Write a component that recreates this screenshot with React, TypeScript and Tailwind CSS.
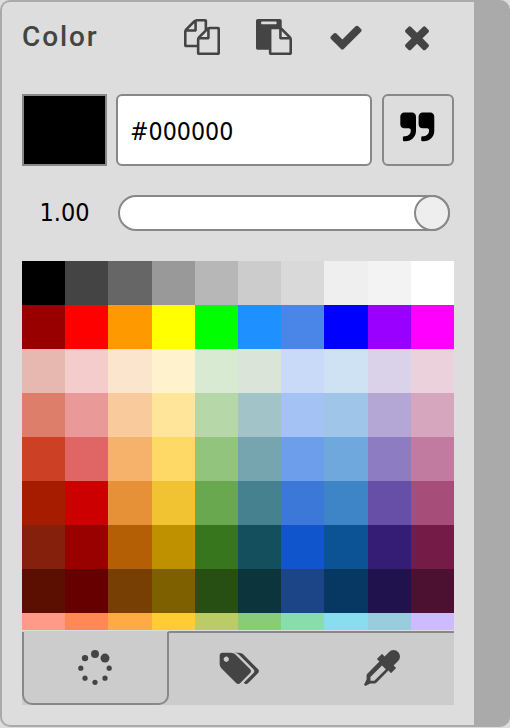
import React from 'react';

const palette: string[] = [
  '#000000', '#444444', '#666666', '#999999', '#b7b7b7', '#cccccc', '#d9d9d9', '#efefef', '#f3f3f3', '#ffffff',
  '#980000', '#ff0000', '#ff9900', '#ffff00', '#00ff00', '#1e90ff', '#4a86e8', '#0000ff', '#9900ff', '#ff00ff',
  '#e6b8af', '#f4cccc', '#fce5cd', '#fff2cc', '#d9ead3', '#dae4d9', '#c9daf8', '#cfe2f3', '#d9d2e9', '#ead1dc',
  '#dd7e6b', '#ea9999', '#f9cb9c', '#ffe599', '#b6d7a8', '#a2c4c9', '#a4c2f4', '#9fc5e8', '#b4a7d6', '#d5a6bd',
  '#cc4125', '#e06666', '#f6b26b', '#ffd966', '#93c47d', '#76a5af', '#6d9eeb', '#6fa8dc', '#8e7cc3', '#c27ba0',
  '#a61c00', '#cc0000', '#e69138', '#f1c232', '#6aa84f', '#45818e', '#3c78d8', '#3d85c6', '#674ea7', '#a64d79',
  '#85200c', '#990000', '#b45f06', '#bf9000', '#38761d', '#134f5c', '#1155cc', '#0b5394', '#351c75', '#741b47',
  '#5b0f00', '#660000', '#783f04', '#7f6000', '#274e13', '#0c343d', '#1c4587', '#073763', '#20124d', '#4c1130',
  '#ff9988', '#ff8855', '#ffaa44', '#ffcc33', '#bbcc66', '#88cc77', '#88ddaa', '#88ddee', '#99ccdd', '#ccbbff',
];

const COPY =
  'M1696 384q40 0 68 28t28 68v1216q0 40-28 68t-68 28h-960q-40 0-68-28t-28-68v-288h-544q-40 0-68-28t-28-68v-672q0-40 20-88t48-76l408-408q28-28 76-48t88-20h416q40 0 68 28t28 68v328q68-40 128-40h416zm-544 213l-299 299h299v-299zm-640-384l-299 299h299v-299zm196 647l316-316v-416h-384v416q0 40-28 68t-68 28h-416v640h512v-256q0-40 20-88t48-76zm956 804v-1152h-384v416q0 40-28 68t-68 28h-416v640h896z';
const PASTE =
  'M768 1664h896v-640h-416q-40 0-68-28t-28-68v-416h-384v1152zm256-1440v-64q0-13-9.5-22.5t-22.5-9.5h-704q-13 0-22.5 9.5t-9.5 22.5v64q0 13 9.5 22.5t22.5 9.5h704q13 0 22.5-9.5t9.5-22.5zm256 672h299l-299-299v299zm512 128v672q0 40-28 68t-68 28h-960q-40 0-68-28t-28-68v-160h-544q-40 0-68-28t-28-68v-1344q0-40 28-68t68-28h1088q40 0 68 28t28 68v328q21 13 36 28l408 408q28 28 48 76t20 88z';
const CHECK =
  'M1671 566q0 40-28 68l-724 724-136 136q-28 28-68 28t-68-28l-136-136-362-362q-28-28-28-68t28-68l136-136q28-28 68-28t68 28l294 295 656-657q28-28 68-28t68 28l136 136q28 28 28 68z';
const CLOSE =
  'M1490 1322q0 40-28 68l-136 136q-28 28-68 28t-68-28l-294-294-294 294q-28 28-68 28t-68-28l-136-136q-28-28-28-68t28-68l294-294-294-294q-28-28-28-68t28-68l136-136q28-28 68-28t68 28l294 294 294-294q28-28 68-28t68 28l136 136q28 28 28 68t-28 68l-294 294 294 294q28 28 28 68z';
const QUOTE =
  'M832 320v704q0 104-40.5 198.5t-109.5 163.5-163.5 109.5-198.5 40.5h-64q-26 0-45-19t-19-45v-128q0-26 19-45t45-19h64q106 0 181-75t75-181v-32q0-40-28-68t-68-28h-224q-80 0-136-56t-56-136v-384q0-80 56-136t136-56h384q80 0 136 56t56 136zm896 0v704q0 104-40.5 198.5t-109.5 163.5-163.5 109.5-198.5 40.5h-64q-26 0-45-19t-19-45v-128q0-26 19-45t45-19h64q106 0 181-75t75-181v-32q0-40-28-68t-68-28h-224q-80 0-136-56t-56-136v-384q0-80 56-136t136-56h384q80 0 136 56t56 136z';
const TAGS =
  'M384 448q0-53-37.5-90.5t-90.5-37.5-90.5 37.5-37.5 90.5 37.5 90.5 90.5 37.5 90.5-37.5 37.5-90.5zm1067 576q0 53-37 90l-491 492q-39 37-91 37-53 0-90-37l-715-716q-38-37-64.5-101t-26.5-117v-416q0-52 38-90t90-38h416q53 0 117 26.5t102 64.5l715 714q37 39 37 91zm384 0q0 53-37 90l-491 492q-39 37-91 37-36 0-59-14t-53-45l470-470q37-37 37-90 0-52-37-91l-715-714q-38-38-102-64.5t-117-26.5h224q53 0 117 26.5t102 64.5l715 714q37 39 37 91z';
const DROPPER =
  'M1698 94q94 94 94 226.5t-94 225.5l-225 223 104 104q10 10 10 23t-10 23l-210 210q-10 10-23 10t-23-10l-105-105-603 603q-37 37-90 37h-203l-256 128-64-64 128-256v-203q0-53 37-90l603-603-105-105q-10-10-10-23t10-23l210-210q10-10 23-10t23 10l104 104 223-225q93-94 225.5-94t226.5 94zm-1186 1442l576-576-192-192-576 576v192h192z';

function Glyph({ d, className = 'size-9' }: { d: string; className?: string }) {
  return (
    <svg viewBox="0 0 1792 1792" fill="currentColor" overflow="visible" className={`${className} shrink-0`}>
      <path d={d} />
    </svg>
  );
}

function Spinner() {
  return (
    <svg viewBox="0 0 36 36" fill="currentColor" className="size-9">
      <circle cx="18" cy="4" r="4" />
      <circle cx="28" cy="8.1" r="4.5" />
      <circle cx="32.2" cy="18.2" r="2.6" />
      <circle cx="28" cy="28.2" r="2.6" />
      <circle cx="18" cy="32.3" r="2.6" />
      <circle cx="8" cy="28.2" r="2.6" />
      <circle cx="3.8" cy="18.2" r="2.6" />
      <circle cx="8" cy="8.1" r="3.2" />
    </svg>
  );
}

export default function App() {
  return (
    <div className="h-[728px] w-[510px] overflow-hidden bg-[#dddddd]">
      <div className="flex h-[727px] w-[510px] overflow-hidden rounded-[10px] bg-[#aaaaaa] p-0.5 text-[#444444]">
        <main className="flex h-[723px] w-[472px] flex-col rounded-l-[8px] bg-[#dddddd] pr-5 pl-5">
          <header className="flex h-[72px] shrink-0 items-start pt-[17px]">
            <h1 className="w-[162px] font-['Roboto',sans-serif] text-[28px] leading-[35px] font-medium tracking-[1.9px]">
              Color
            </h1>
            <nav className="flex gap-9">
              <button aria-label="Copy"><Glyph d={COPY} /></button>
              <button aria-label="Paste"><Glyph d={PASTE} /></button>
              <button aria-label="Accept"><Glyph d={CHECK} /></button>
              <button aria-label="Close" className="-ml-px"><Glyph d={CLOSE} /></button>
            </nav>
          </header>

          <section className="mt-5 flex h-[72px] shrink-0 text-black">
            <div className="mr-[9px] w-[85px] border-2 border-[#888888] bg-black" />
            <div className="mr-[10px] flex w-[256px] items-center rounded-[6px] border-2 border-[#888888] bg-white pt-[3px] pl-3 font-['DejaVu_Sans_Condensed','DejaVu_Sans',sans-serif] text-[24.7px]">
              #000000
            </div>
            <button aria-label="Quote" className="flex w-[72px] justify-center rounded-[6px] border-2 border-[#888888] pt-[14px] pr-px">
              <Glyph d={QUOTE} className="size-[36.6px]" />
            </button>
          </section>

          <section className="mt-[29px] flex h-9 shrink-0 items-center text-black">
            <span className="w-24 pl-[17.5px] font-['DejaVu_Sans_Condensed','DejaVu_Sans',sans-serif] text-[25px]">1.00</span>
            <div className="flex h-9 w-[332px] justify-end rounded-full border-2 border-[#888888] bg-white">
              <div className="-m-0.5 size-9 rounded-full border-2 border-[#888888] bg-[#eeeeee]" />
            </div>
          </section>

          <section className="mt-[30px] grid h-[369px] w-[432px] shrink-0 auto-rows-[44px] grid-cols-10 overflow-hidden">
            {palette.map((color, i) => (
              <div key={i} style={{ backgroundColor: color }} />
            ))}
          </section>

          <footer className="mt-px flex h-[74px] w-[432px] shrink-0 bg-[#cccccc]">
            <button aria-label="Palette" className="mt-px flex w-[147px] items-center justify-center rounded-b-[10px] border-x-2 border-b-2 border-[#888888] pr-[2px] pt-px">
              <Spinner />
            </button>
            <div className="-ml-[2px] flex flex-1 rounded-tl-[3px] border-t-2 border-[#888888]">
              <button aria-label="Tags" className="flex w-[142px] items-center justify-center pb-[2px] pl-[2px]">
                <Glyph d={TAGS} className="size-[37px]" />
              </button>
              <button aria-label="Eyedropper" className="flex flex-1 items-center justify-center pb-[2px]">
                <Glyph d={DROPPER} />
              </button>
            </div>
          </footer>
        </main>
      </div>
    </div>
  );
}
